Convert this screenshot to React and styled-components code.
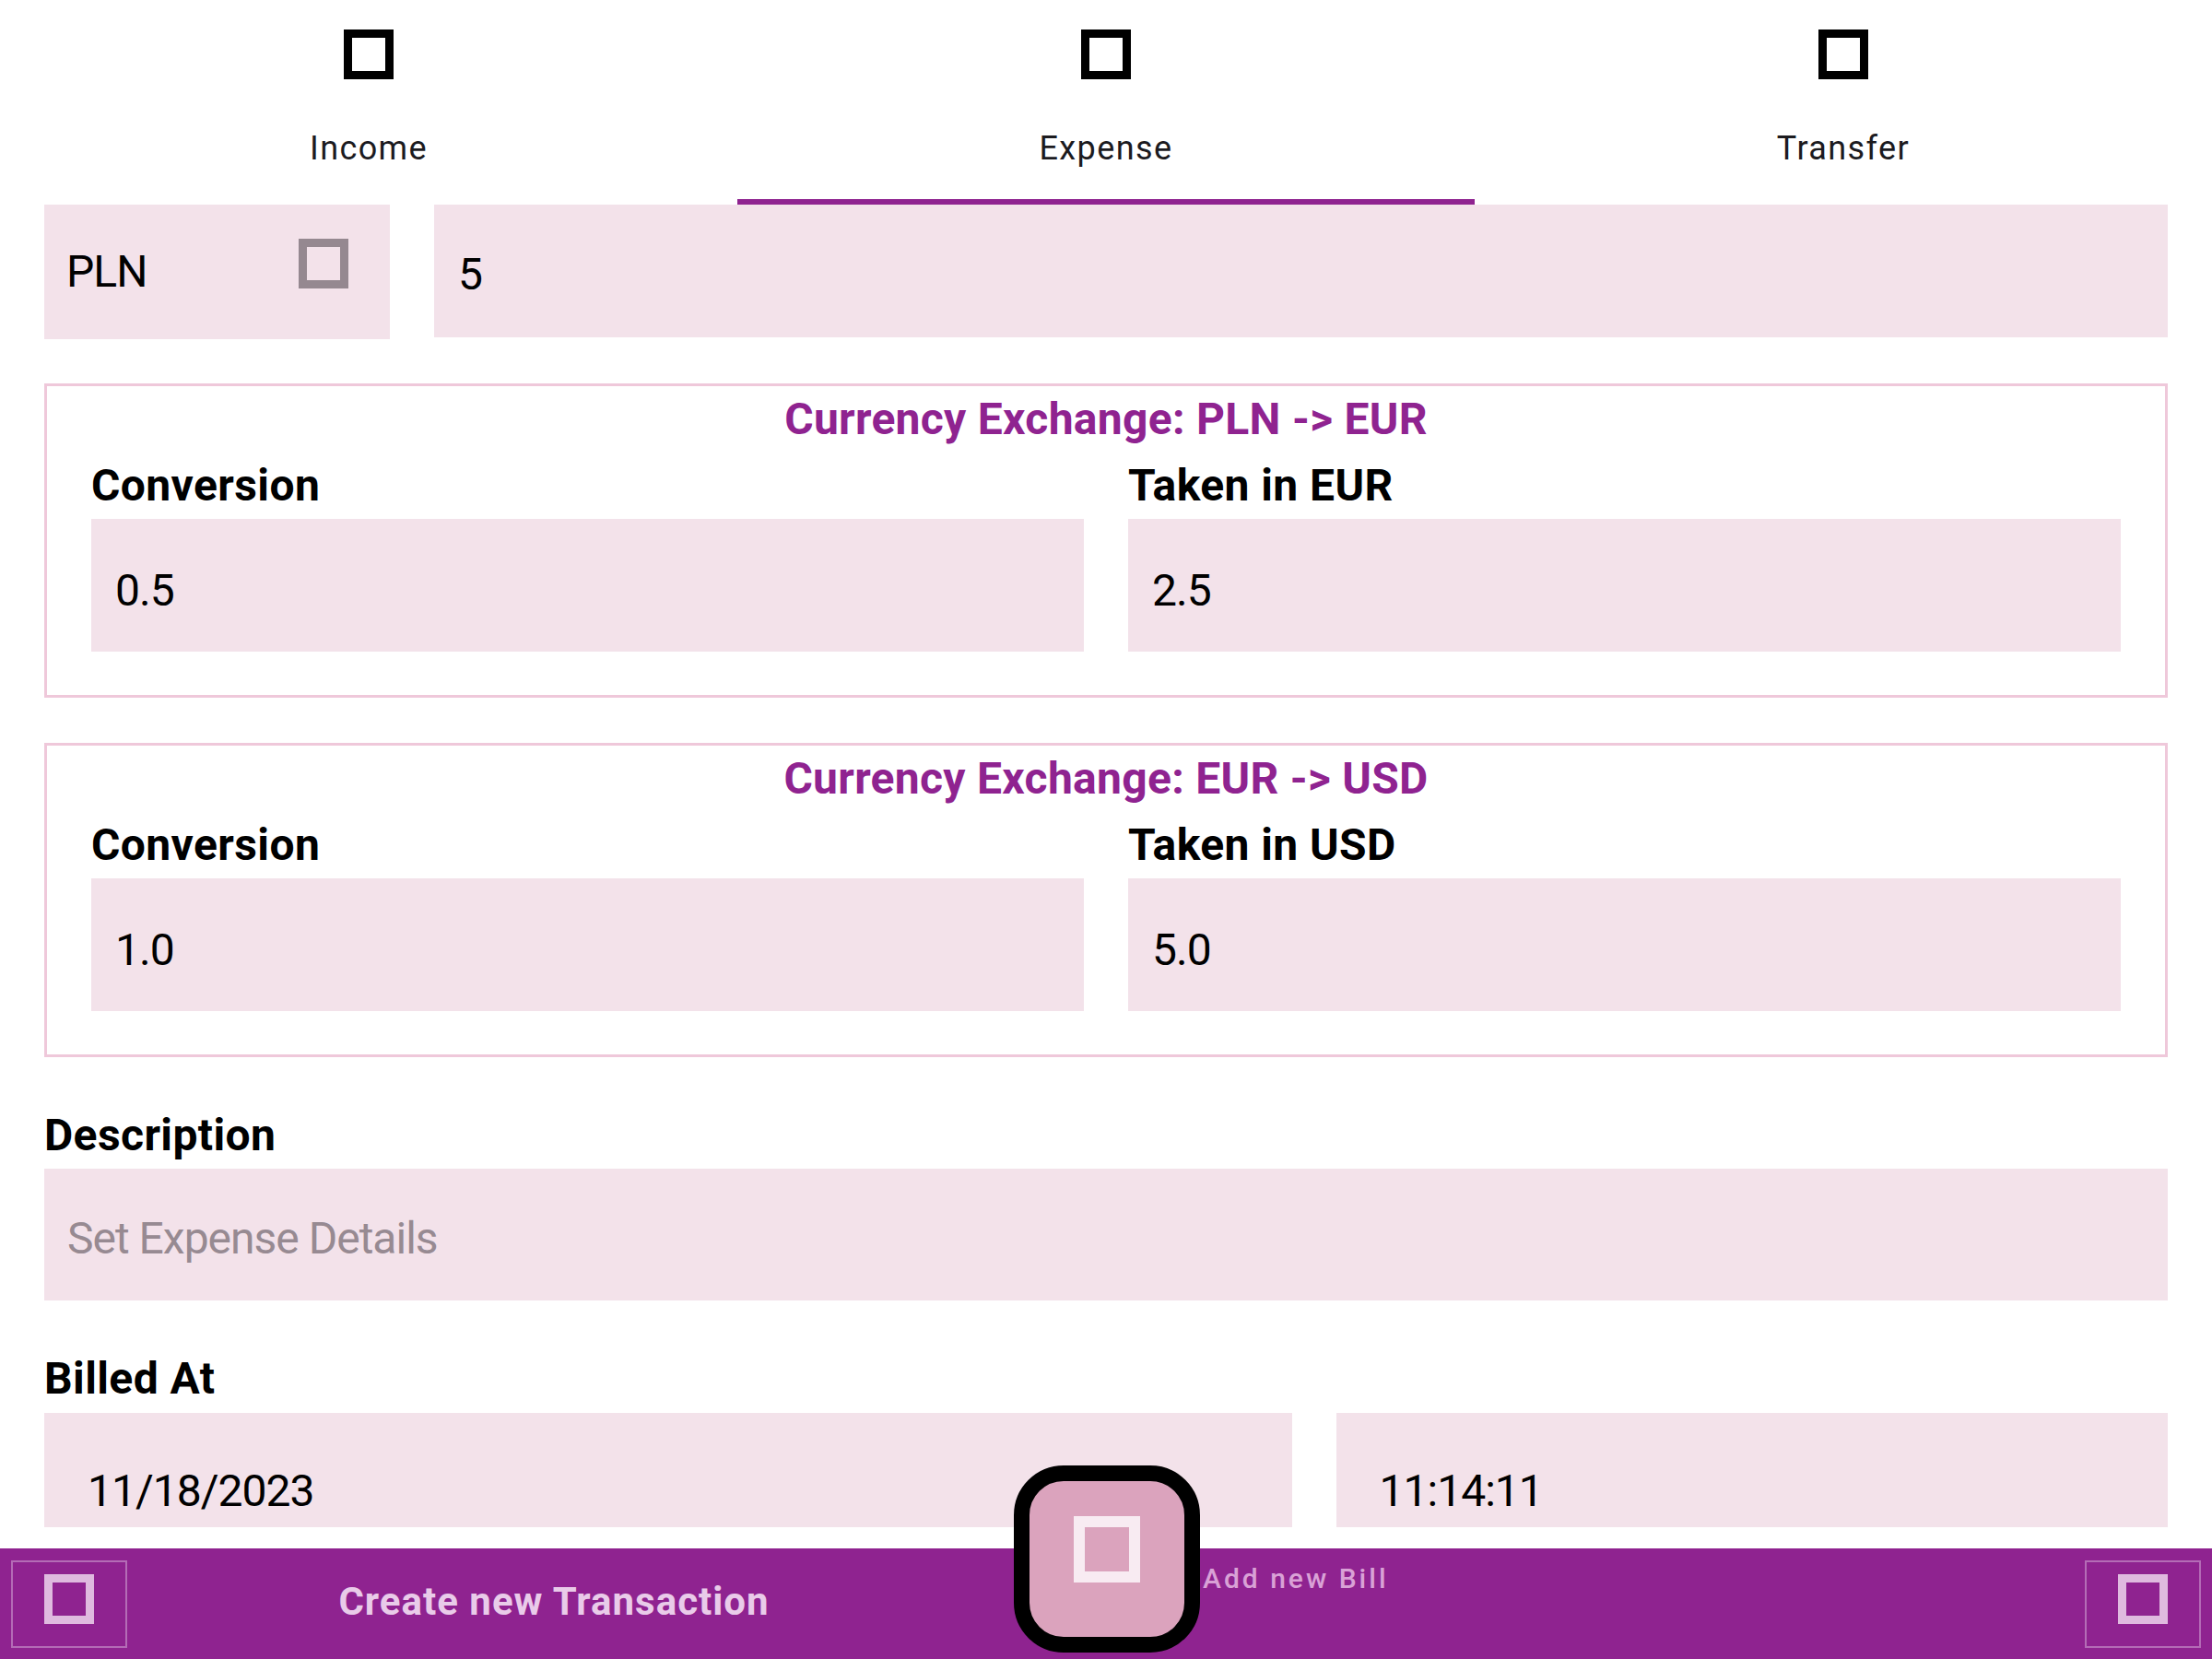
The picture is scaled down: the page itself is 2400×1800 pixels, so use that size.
import React from 'react'
import styled, { createGlobalStyle } from 'styled-components'

const GlobalStyle = createGlobalStyle`
  html, body {
    margin: 0;
    padding: 0;
    background: #ffffff;
  }
  body {
    font-family: Roboto, "Noto Sans", "Liberation Sans", sans-serif;
    color: #000000;
  }
`

const Screen = styled.div`
  width: 2400px;
  height: 1800px;
  display: flex;
  flex-direction: column;
  overflow: hidden;
  background: #ffffff;
`

// missing material icon glyph: rendered as a hollow square
const Glyph = styled.span`
  display: block;
  box-sizing: border-box;
  flex-shrink: 0;
  width: ${p => p.$size}px;
  height: ${p => p.$size}px;
  border: ${p => p.$stroke}px solid ${p => p.$color};
`

const TabBar = styled.nav`
  display: grid;
  grid-template-columns: repeat(3, 1fr);
  height: 222px;
  flex-shrink: 0;
`

const Tab = styled.div`
  display: flex;
  flex-direction: column;
  align-items: center;
  box-sizing: border-box;
  padding-top: 32px;
  border-bottom: 6px solid ${p => (p.$active ? '#8f2390' : 'transparent')};
`

const TabLabel = styled.span`
  margin-top: 57px;
  font-size: 36px;
  line-height: 36px;
  letter-spacing: 1.4px;
  color: #1c1b1f;
`

const Content = styled.main`
  flex: 1;
  min-height: 0;
  overflow: hidden;
  padding: 0 48px;
`

const AmountRow = styled.div`
  display: grid;
  grid-template-columns: 375px 1fr;
  gap: 48px;
`

const Filled = styled.div`
  background: #f3e2ea;
  box-sizing: border-box;
  display: flex;
  align-items: center;
  font-size: 48px;
  line-height: 48px;
  letter-spacing: -1px;
  color: #000000;
`

const SelectField = styled(Filled)`
  height: 146px;
  padding: 0 45px 0 24px;
  justify-content: space-between;
`

const SelectIcon = styled(Glyph)`
  align-self: flex-start;
  margin-top: 37px;
`

const AmountField = styled(Filled)`
  height: 144px;
  padding: 8px 0 0 26px;
`

const Exchange = styled.section`
  margin-top: ${p => p.$gap}px;
  border: 3px solid #efc8da;
  padding: 12px 48px 47px;
`

const ExchangeTitle = styled.h2`
  margin: 0;
  text-align: center;
  font-size: 48px;
  line-height: 48px;
  font-weight: 700;
  letter-spacing: 0.3px;
  color: #8f2390;
`

const ExchangeGrid = styled.div`
  margin-top: 24px;
  display: grid;
  grid-template-columns: 1fr 1fr;
  gap: 48px;
`

const Label = styled.div`
  font-size: 48px;
  line-height: 48px;
  font-weight: 700;
  letter-spacing: 0.4px;
  margin-top: ${p => p.$top || 0}px;
  margin-bottom: ${p => p.$bottom || 12}px;
`

const ValueField = styled(Filled)`
  height: 144px;
  padding: 12px 0 0 26px;
`

const Placeholder = styled(Filled)`
  height: 143px;
  padding: 8px 0 0 25px;
  color: #978a92;
`

const DateRow = styled.div`
  display: grid;
  grid-template-columns: 3fr 2fr;
  gap: 48px;
`

const DateField = styled(Filled)`
  height: 124px;
  align-items: flex-end;
  padding: 0 0 15px 47px;
`

const BottomBar = styled.footer`
  position: relative;
  flex-shrink: 0;
  height: 120px;
  background: #8f2390;
  display: grid;
  grid-template-columns: 1fr 1fr;
`

const BarHalf = styled.div`
  display: flex;
  align-items: center;
  padding: 0 12px 0 ${p => p.$left}px;
`

const BarButton = styled.div`
  width: 126px;
  height: 95px;
  box-sizing: border-box;
  border: 2px solid #b46cb6;
  padding-bottom: 11px;
  display: flex;
  align-items: center;
  justify-content: center;
  margin-left: ${p => (p.$push ? 'auto' : '0')};
`

const CreateTitle = styled.div`
  flex: 1;
  padding: 0 124px 4px 0;
  text-align: center;
  font-size: 42px;
  line-height: 42px;
  font-weight: 700;
  letter-spacing: 1px;
  color: #e9cbe9;
`

const AddLabel = styled.div`
  align-self: flex-start;
  margin-top: 18px;
  font-size: 30px;
  line-height: 30px;
  font-weight: 500;
  letter-spacing: 3px;
  color: #d9a1d6;
`

const Fab = styled.button`
  position: absolute;
  left: calc(50% - 100px);
  top: -90px;
  width: 202px;
  height: 203px;
  box-sizing: border-box;
  padding: 0 0 22px;
  border: 17px solid #000000;
  border-radius: 54px;
  background: #dba3bd;
  display: flex;
  align-items: center;
  justify-content: center;
  z-index: 2;
`

const tabs = [
  { name: 'Income' },
  { name: 'Expense', active: true },
  { name: 'Transfer' },
]

const exchanges = [
  { from: 'PLN', to: 'EUR', rate: '0.5', taken: '2.5', gap: 48 },
  { from: 'EUR', to: 'USD', rate: '1.0', taken: '5.0', gap: 49 },
]

const ExchangeBox = ({ from, to, rate, taken, gap }) => (
  <Exchange $gap={gap}>
    <ExchangeTitle>Currency Exchange: {from} -&gt; {to}</ExchangeTitle>
    <ExchangeGrid>
      <div>
        <Label>Conversion</Label>
        <ValueField>{rate}</ValueField>
      </div>
      <div>
        <Label>Taken in {to}</Label>
        <ValueField>{taken}</ValueField>
      </div>
    </ExchangeGrid>
  </Exchange>
)

const App = () => (
  <Screen>
    <GlobalStyle />
    <TabBar>
      {tabs.map(tab => (
        <Tab key={tab.name} $active={tab.active}>
          <Glyph $size={54} $stroke={9} $color="#000000" />
          <TabLabel>{tab.name}</TabLabel>
        </Tab>
      ))}
    </TabBar>

    <Content>
      <AmountRow>
        <SelectField>
          PLN
          <SelectIcon $size={54} $stroke={9} $color="#958890" />
        </SelectField>
        <AmountField>5</AmountField>
      </AmountRow>

      {exchanges.map(ex => (
        <ExchangeBox key={ex.from + ex.to} {...ex} />
      ))}

      <Label $top={61}>Description</Label>
      <Placeholder>Set Expense Details</Placeholder>

      <Label $top={61} $bottom={13}>Billed At</Label>
      <DateRow>
        <DateField>11/18/2023</DateField>
        <DateField>11:14:11</DateField>
      </DateRow>
    </Content>

    <BottomBar>
      <BarHalf $left={12}>
        <BarButton>
          <Glyph $size={54} $stroke={9} $color="#dfbadf" />
        </BarButton>
        <CreateTitle>Create new Transaction</CreateTitle>
      </BarHalf>
      <BarHalf $left={105}>
        <AddLabel>Add new Bill</AddLabel>
        <BarButton $push>
          <Glyph $size={54} $stroke={9} $color="#dfbadf" />
        </BarButton>
      </BarHalf>
      <Fab type="button" aria-label="Add new Bill">
        <Glyph $size={72} $stroke={12} $color="#f8ebf2" />
      </Fab>
    </BottomBar>
  </Screen>
)

export default App
